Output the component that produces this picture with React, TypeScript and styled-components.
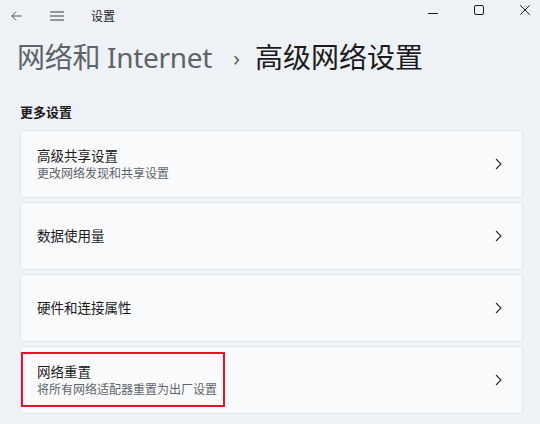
import styled, { createGlobalStyle } from "styled-components";

const GlobalStyle = createGlobalStyle`
  html, body {
    margin: 0;
    padding: 0;
    background: #eef2f7;
  }
  body {
    font-family: "Noto Sans", "Noto Sans CJK SC", sans-serif;
    color: #1b1b1b;
  }
`;

const Page = styled.div`
  width: 540px;
  height: 424px;
  overflow: hidden;
  background: #eef2f7;
`;

const TitleBar = styled.div`
  height: 32px;
  display: flex;
  align-items: center;
  padding-left: 11px;
`;

const NavIcon = styled.svg`
  flex: none;
  margin-right: ${(p) => p.$gap}px;
`;

const AppName = styled.span`
  font-size: 12px;
  color: #1b1b1b;
`;

const Controls = styled.div`
  margin-left: auto;
  display: flex;
  align-items: center;
  gap: 36px;
  padding-right: 10px;
  align-self: flex-start;
  height: 19px;
`;

const Header = styled.h1`
  margin: 5px 0 0 17px;
  height: 40px;
  display: flex;
  align-items: center;
  font-size: 28px;
  font-weight: 400;
  line-height: 40px;
  letter-spacing: 0;
`;

const Crumb = styled.span`
  color: #5f6266;
  letter-spacing: -0.3px;
`;

const Sep = styled.span`
  color: #5f6266;
  font-size: 22px;
  margin: 0 15px 0 21px;
`;

const Current = styled.span`
  color: #1b1b1b;
`;

const SectionLabel = styled.div`
  margin: 25px 0 8px 20px;
  font-size: 13px;
  font-weight: 600;
  line-height: 20px;
`;

const CardList = styled.div`
  display: flex;
  flex-direction: column;
  gap: 4px;
  padding: 0 17px 0 20px;
`;

const Card = styled.div`
  position: relative;
  height: 68px;
  box-sizing: border-box;
  border: 1px solid #e2e6eb;
  border-radius: 4px;
  background: #f9fafc;
  display: flex;
  align-items: center;
  padding: 0 20px 0 16px;
`;

const TextBlock = styled.div`
  flex: 1;
  display: flex;
  flex-direction: column;
`;

const CardTitle = styled.div`
  font-size: 13.5px;
  line-height: 19px;
  color: #1b1b1b;
`;

const CardSub = styled.div`
  font-size: 12px;
  line-height: 16px;
  color: #616469;
`;

const Highlight = styled.div`
  position: absolute;
  left: 0;
  top: 5px;
  width: 204px;
  height: 55px;
  box-sizing: border-box;
  border: 2px solid #e81224;
  pointer-events: none;
`;

function Chevron() {
  return (
    <svg width="7" height="12" viewBox="0 0 7 12" fill="none">
      <path d="M1 1l5 5-5 5" stroke="#2b2b2b" strokeWidth="1.1" />
    </svg>
  );
}

const items = [
  { title: "高级共享设置", sub: "更改网络发现和共享设置" },
  { title: "数据使用量" },
  { title: "硬件和连接属性" },
  { title: "网络重置", sub: "将所有网络适配器重置为出厂设置", marked: true },
];

export default function App() {
  return (
    <Page>
      <GlobalStyle />
      <TitleBar>
        <NavIcon $gap={28} width="11" height="10" viewBox="0 0 11 10" fill="none">
          <path d="M10.5 5H1M5 0.8L0.9 5 5 9.2" stroke="#5a5a5a" strokeWidth="1" />
        </NavIcon>
        <NavIcon $gap={27} width="14" height="10" viewBox="0 0 14 10" fill="none">
          <path d="M0 1h14M0 5h14M0 9h14" stroke="#3a3a3a" strokeWidth="1" />
        </NavIcon>
        <AppName>设置</AppName>
        <Controls>
          <svg width="10" height="10" viewBox="0 0 10 10" fill="none">
            <path d="M0 8.5h10" stroke="#1b1b1b" strokeWidth="1" />
          </svg>
          <svg width="10" height="10" viewBox="0 0 10 10" fill="none">
            <rect x="0.5" y="0.5" width="9" height="9" rx="1.5" stroke="#1b1b1b" strokeWidth="1" />
          </svg>
          <svg width="10" height="10" viewBox="0 0 10 10" fill="none">
            <path d="M0.3 0.3l9.4 9.4M9.7 0.3L0.3 9.7" stroke="#1b1b1b" strokeWidth="1" />
          </svg>
        </Controls>
      </TitleBar>
      <Header>
        <Crumb>网络和 Internet</Crumb>
        <Sep>›</Sep>
        <Current>高级网络设置</Current>
      </Header>
      <SectionLabel>更多设置</SectionLabel>
      <CardList>
        {items.map((it) => (
          <Card key={it.title}>
            <TextBlock>
              <CardTitle>{it.title}</CardTitle>
              {it.sub && <CardSub>{it.sub}</CardSub>}
            </TextBlock>
            <Chevron />
            {it.marked && <Highlight />}
          </Card>
        ))}
      </CardList>
    </Page>
  );
}
